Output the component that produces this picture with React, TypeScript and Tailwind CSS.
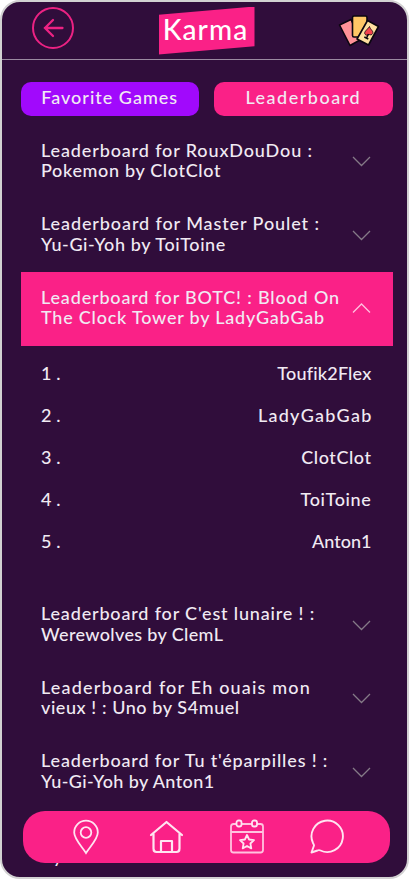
import React from 'react';

type Line = { text: string; track: string };
type Game = { lines: Line[]; open?: boolean };

const before: Game[] = [
  { lines: [{ text: 'Leaderboard for RouxDouDou :', track: 'tracking-[0.87px]' }, { text: 'Pokemon by ClotClot', track: 'tracking-[0.65px]' }] },
  { lines: [{ text: 'Leaderboard for Master Poulet :', track: 'tracking-[0.9px]' }, { text: 'Yu-Gi-Yoh by ToiToine', track: 'tracking-[0.6px]' }] },
  { open: true, lines: [{ text: 'Leaderboard for BOTC! : Blood On', track: 'tracking-[0.83px]' }, { text: 'The Clock Tower by LadyGabGab', track: 'tracking-[0.78px]' }] },
];
const after: Game[] = [
  { lines: [{ text: "Leaderboard for C'est lunaire ! :", track: 'tracking-[0.83px]' }, { text: 'Werewolves by ClemL', track: 'tracking-[0.35px]' }] },
  { lines: [{ text: 'Leaderboard for Eh ouais mon', track: 'tracking-[1.18px]' }, { text: 'vieux ! : Uno by S4muel', track: 'tracking-[0.57px]' }] },
  { lines: [{ text: "Leaderboard for Tu t'éparpilles ! :", track: 'tracking-[0.84px]' }, { text: 'Yu-Gi-Yoh by Anton1', track: 'tracking-[0.4px]' }] },
];
const players: Line[] = [
  { text: 'Toufik2Flex', track: 'tracking-[0.2px]' },
  { text: 'LadyGabGab', track: 'tracking-[1.25px] -mr-px' },
  { text: 'ClotClot', track: 'tracking-[0.55px]' },
  { text: 'ToiToine', track: 'tracking-[0.65px]' },
  { text: 'Anton1', track: 'tracking-[0px]' },
];

function Row({ game }: { game: Game }) {
  return (
    <div className={`flex h-[73.5px] shrink-0 items-center justify-between pl-[20.5px] pr-[21.5px] ${game.open ? 'bg-[#fa2187]' : ''}`}>
      <div className="-mt-[3px] text-[18px] leading-[20.4px] whitespace-nowrap">
        {game.lines.map((l) => (
          <div key={l.text} className={l.track}>{l.text}</div>
        ))}
      </div>
      <svg className="-mt-px" width="19" height="12" viewBox="0 0 19 12" fill="none" stroke={game.open ? '#ffc0df' : '#857a87'} strokeWidth="1.3">
        <path d={game.open ? 'M1 10.5 9.5 2 18 10.5' : 'M1 2 9.5 10.5 18 2'} />
      </svg>
    </div>
  );
}

function Cards() {
  return (
    <svg width="42" height="34" viewBox="0 0 42 34" stroke="#0b0610" strokeWidth="1.6" strokeLinejoin="round">
      <path d="M1.5 11 13 5.5 22 26 12 31.5Z" fill="#ff9298" />
      <rect x="14.5" y="2" width="14.5" height="21" rx="1.5" fill="#ffc766" />
      <path d="M29.500 6.5 40.500 12.5 30.5 31 19 25Z" fill="#ffdf9f" />
      <path d="M31.5 12.5c.8 3.2 4.2 4.4 3.2 7-.8 1.7-2.8 1.6-3.7.8-.9 1-3 1.5-4-.1-1.4-2.4 1.8-3.9 4.5-7.700Z" fill="#f5424e" strokeWidth="0.8" />
      <path d="m30.500 20-2 4m-2.200-1 4 2" fill="none" strokeWidth="1.5" />
    </svg>
  );
}

export default function App() {
  return (
    <div className="h-[879px] w-[410px] bg-white pr-px font-['Lato','Liberation_Sans',sans-serif] font-medium text-[#f1eaf3]">
      <div className="relative flex h-full w-full flex-col overflow-hidden rounded-[20px] border-2 border-[#d2d1d2] bg-[#300d3b]">
        <header className="flex h-[58px] shrink-0 items-center justify-between border-b border-[#9b8aa1] pl-[30px] pr-[27px]">
          <svg width="42" height="42" viewBox="0 0 42 42" className="-mt-[5px]" fill="none" stroke="#ec2283" strokeWidth="2">
            <circle cx="21" cy="21" r="20" />
            <path d="M30.5 21H13M21 13l-8 8 8 8" strokeWidth="2.3" strokeLinecap="round" />
          </svg>
          <div className="ml-px flex h-[48px] w-[96px] items-center justify-center bg-[#fa2187] [clip-path:polygon(0_17%,100%_0,100%_83%,0_100%)]">
            <span className="mr-[2px] pb-[4px] text-[28px] leading-none tracking-[1.1px] text-white">Karma</span>
          </div>
          <Cards />
        </header>

        <div className="mt-[22px] flex h-[34px] shrink-0 gap-[15px] pl-[18.5px] pr-[14.5px] text-[18px]">
          <button className="flex-1 rounded-[10px] bg-[#a109fc] pb-[5px] leading-none tracking-[1px]">Favorite Games</button>
          <button className="flex-1 rounded-[10px] bg-[#fa2187] pb-[5px] leading-none tracking-[1.5px]">Leaderboard</button>
        </div>

        <div className="ml-[18.5px] mr-[14.5px] mt-[9px] flex flex-col">
          {before.map((g) => <Row key={g.lines[0].text} game={g} />)}
          <ol className="flex h-[243px] shrink-0 flex-col pl-[20.5px] pr-[21px] pt-[6.5px] text-[18px]">
            {players.map((p, i) => (
              <li key={p.text} className="flex h-[42px] items-center justify-between">
                <span className="tracking-[0.1px]">{i + 1} .</span>
                <span className={p.track}>{p.text}</span>
              </li>
            ))}
          </ol>
          {after.map((g) => <Row key={g.lines[0].text} game={g} />)}
          <div className="h-[70px] shrink-0 pl-[32.5px] pt-[37px] text-[18px] leading-[20.4px]">y</div>
        </div>

        <nav className="absolute left-[21px] top-[809px] flex h-[51.5px] w-[367px] items-center rounded-[22px] bg-[#fa2187] pl-[44.5px] pr-[41px]">
          <svg className="mr-[45px]" width="36" height="36" viewBox="0 0 36 36" fill="none" stroke="#ffe4f1" strokeWidth="1.8">
            <path d="M18 34C13.5 27 6.2 20 6.2 13.5a11.8 11.8 0 0 1 23.6 0C29.8 20 22.5 27 18 34Z" />
            <circle cx="18" cy="13.5" r="5.3" />
          </svg>
          <svg className="mr-[44px]" width="36" height="36" viewBox="0 0 36 36" fill="none" stroke="#ffe4f1" strokeWidth="2.2" strokeLinecap="round" strokeLinejoin="round">
            <path d="M2 16 17.5 3 33 16M4.500 15v14.500q0 3.500 3 3.500h20q3 0 3-3.500V15M12 33V22h11v11" />
          </svg>
          <svg className="mr-[44px]" width="36" height="36" viewBox="0 0 36 36" fill="none" stroke="#ffc3df" strokeWidth="1.8" strokeLinejoin="round">
            <path d="M7 5H4.5Q2 5 2 7.5v23.500Q2 33.500 4.500 33.500h27Q34 33.500 34 31V7.500Q34 5 31.500 5H28M12.500 5h10.500M2 13h32" />
            <rect x="7.500" y="1.500" width="5" height="6" rx="2" stroke="#ffe4f1" />
            <rect x="23" y="1.500" width="5" height="6" rx="2" stroke="#ffe4f1" />
            <path stroke="#ffe4f1" d="m18 16 2.100 4.500 4.900.6-3.600 3.400.9 4.900-4.300-2.400-4.300 2.400.9-4.900-3.600-3.400 4.900-.6Z" />
          </svg>
          <svg width="36" height="36" viewBox="0 0 36 36" fill="none" stroke="#ffe4f1" strokeWidth="1.9" strokeLinejoin="round">
            <path d="M2.500 33.500 5 26.500Q5 25.500 4 24A15.700 15.700 0 1 1 11.500 31.500Q10 30.800 8.500 31.500Z" />
          </svg>
        </nav>
      </div>
    </div>
  );
}
